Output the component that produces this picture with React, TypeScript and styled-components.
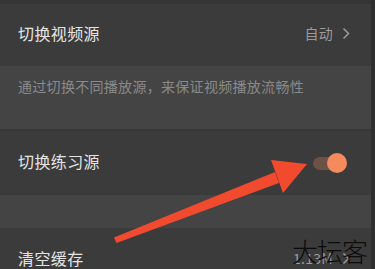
import React from 'react';
import styled, { createGlobalStyle } from 'styled-components';

const GlobalStyle = createGlobalStyle`
  html, body {
    margin: 0;
    padding: 0;
    background: #2f2f2f;
    font-family: 'Noto Sans CJK SC', 'Noto Sans', sans-serif;
  }
`;

const Page = styled.div`
  position: relative;
  width: 371px;
  height: 269px;
  overflow: hidden;
  background: #353535;
  padding-top: 4px;
  box-sizing: border-box;
`;

const Row = styled.div<{ $height: number }>`
  height: ${(p) => p.$height}px;
  display: flex;
  align-items: center;
  justify-content: space-between;
  padding: 0 24px 4px 18px;
  background: #3b3b3b;
  box-sizing: border-box;
`;

const Label = styled.span`
  font-size: 16px;
  color: #e4e4e4;
  letter-spacing: 0.4px;
`;

const Value = styled.span`
  display: flex;
  align-items: center;
  gap: 9px;
  font-size: 14px;
  color: #9a9a9a;
  letter-spacing: 0.3px;
  margin-right: -3px;
`;

const Note = styled.div<{ $height: number }>`
  height: ${(p) => p.$height}px;
  background: #444444;
  padding: 10px 18px 0;
  box-sizing: border-box;
  font-size: 14px;
  color: #8a8a8a;
  letter-spacing: 0.3px;
`;

const Divider = styled.div`
  height: 2px;
  background: #363636;
`;

const Switch = styled.div`
  position: relative;
  width: 34px;
  height: 20px;
  display: flex;
  align-items: center;
  margin-top: 4px;
`;

const Track = styled.div`
  width: 28px;
  height: 13px;
  border-radius: 7px;
  background: #6b5146;
`;

const Knob = styled.div`
  position: absolute;
  right: 0;
  top: 0;
  width: 20px;
  height: 20px;
  border-radius: 50%;
  background: #f58a5c;
`;

const Watermark = styled.div`
  position: absolute;
  left: 292px;
  top: 232px;
  font-size: 26px;
  font-weight: 300;
  color: #0c0c0c;
  letter-spacing: -1px;
  font-family: 'Noto Sans CJK SC', sans-serif;
`;

const ArrowLayer = styled.svg`
  position: absolute;
  left: 0;
  top: 0;
  pointer-events: none;
`;

const Chevron = () => (
  <svg width="8" height="13" viewBox="0 0 8 13">
    <path d="M1.5 1.5 L6.5 6.5 L1.5 11.5" fill="none" stroke="#9a9a9a" strokeWidth="1.5" />
  </svg>
);

const App: React.FC = () => {
  return (
    <>
      <GlobalStyle />
      <Page>
        <Row $height={62}>
          <Label>切换视频源</Label>
          <Value>
            自动
            <Chevron />
          </Value>
        </Row>
        <Note $height={63}>通过切换不同播放源，来保证视频播放流畅性</Note>
        <Divider />
        <Row $height={64}>
          <Label>切换练习源</Label>
          <Switch>
            <Track />
            <Knob />
          </Switch>
        </Row>
        <Note $height={33} />
        <Row $height={64}>
          <Label>清空缓存</Label>
          <Value>
            1.13M
            <Chevron />
          </Value>
        </Row>
        <ArrowLayer width="371" height="269" viewBox="0 0 371 269">
          <polygon
            points="114,237.5 116.5,243 279,183 275,172"
            fill="#f24a2e"
          />
          <polygon points="271,160 307,164 283,193" fill="#f24a2e" />
        </ArrowLayer>
        <Watermark>大坛客</Watermark>
      </Page>
    </>
  );
};

export default App;
